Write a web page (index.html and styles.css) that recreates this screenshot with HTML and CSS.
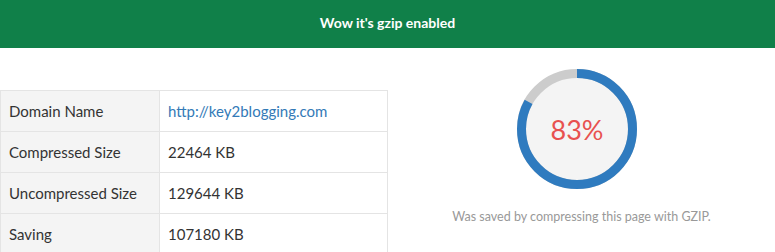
FILE: index.html
```html
<!DOCTYPE html>
<html lang="en">
<head>
    <meta charset="UTF-8">
    <meta name="viewport" content="width=device-width, initial-scale=1.0">
    <title>Gzip Test Result</title>
    <link rel="stylesheet" href="styles.css">
</head>
<body>

    <div class="banner">Wow it's gzip enabled</div>

    <div class="result">
        <table class="info-table">
            <tr>
                <td class="label">Domain Name</td>
                <td><a href="#">http://key2blogging.com</a></td>
            </tr>
            <tr>
                <td class="label">Compressed Size</td>
                <td>22464 KB</td>
            </tr>
            <tr>
                <td class="label">Uncompressed Size</td>
                <td>129644 KB</td>
            </tr>
            <tr>
                <td class="label">Saving</td>
                <td>107180 KB</td>
            </tr>
        </table>

        <div class="chart">
            <div class="ring">
                <svg width="120" height="120" viewBox="0 0 120 120">
                    <circle cx="60" cy="60" r="55.5" fill="#f4f4f4" stroke="#cccccc" stroke-width="9"/>
                    <circle cx="60" cy="60" r="55.5" fill="none" stroke="#2f7bbf" stroke-width="9"
                            stroke-dasharray="289.4 348.7" transform="rotate(-90 60 60)"/>
                </svg>
                <span class="percent">83%</span>
            </div>
            <p class="caption">Was saved by compressing this page with GZIP.</p>
        </div>
    </div>

</body>
</html>
```

FILE: styles.css
```css
body {
    margin: 0;
    font-family: Lato, "Open Sans", Arial, sans-serif;
    color: #333;
    background: #fff;
}
.banner {
    background: #108049;
    color: #fff;
    font-weight: bold;
    font-size: 14px;
    text-align: center;
    height: 48px;
    line-height: 46px;
}
.result {
    display: flex;
    margin-top: 42px;
}
.info-table {
    border-collapse: collapse;
    width: 388px;
    font-size: 15px;
}
.info-table td {
    border: 1px solid #e4e4e4;
    padding: 10px 8px;
    height: 20px;
    line-height: 19px;
}
.info-table td.label {
    background: #f4f4f4;
    width: 142px;
}
.info-table a {
    color: #337ab7;
    text-decoration: none;
}
.chart {
    flex: 1;
    display: flex;
    flex-direction: column;
    align-items: center;
    margin-top: -21px;
}
.ring {
    position: relative;
    width: 120px;
    height: 120px;
    margin-right: 9px;
}
.ring svg {
    display: block;
}
.percent {
    position: absolute;
    inset: 0;
    display: flex;
    align-items: center;
    justify-content: center;
    color: #e8514f;
    font-size: 27px;
}
.caption {
    margin: 20px 0 0;
    font-size: 12.5px;
    color: #999;
}
```
